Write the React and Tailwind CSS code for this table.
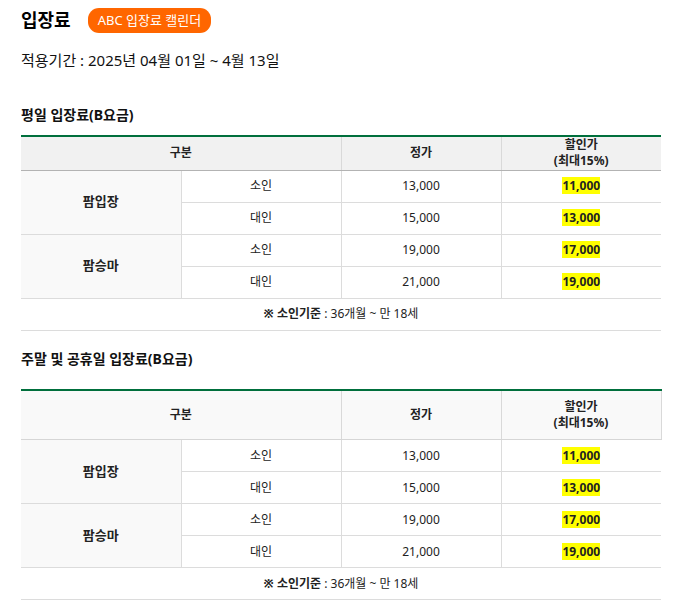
import React from 'react';

const rows = [
  { group: '팜입장', items: [['소인', '13,000', '11,000'], ['대인', '15,000', '13,000']] },
  { group: '팜승마', items: [['소인', '19,000', '17,000'], ['대인', '21,000', '19,000']] },
];

function PriceTable({ variant }) {
  const weekday = variant === 'weekday';
  const headBg = weekday ? 'bg-[#f1f1f1]' : 'bg-[#f9f9f9]';
  const headLine = weekday ? 'border-b-[#b3b3b3]' : 'border-b-[#d6d6d6]';
  const headH = weekday ? 'h-[34px]' : 'h-[50px]';

  return (
    <table className="w-[640px] border-collapse table-fixed border-t-2 border-t-[#006f3c] text-[12px] text-[#222]">
      <colgroup>
        <col className="w-[160px]" />
        <col className="w-[160px]" />
        <col className="w-[160px]" />
        <col className="w-[160px]" />
      </colgroup>
      <thead>
        <tr className={headBg}>
          <th colSpan={2} className={`${headH} border-b ${headLine} border-r border-r-[#d9d9d9] font-bold leading-[16px] p-0`}>구분</th>
          <th className={`${headH} border-b ${headLine} border-r border-r-[#d9d9d9] font-bold leading-[16px] p-0`}>정가</th>
          <th className={`${headH} border-b ${headLine} font-bold leading-[16px] p-0 ${weekday ? '' : 'border-r border-r-[#d9d9d9]'}`}>
            할인가
            <br />
            (최대15%)
          </th>
        </tr>
      </thead>
      <tbody>
        {rows.map((g) =>
          g.items.map(([kind, price, sale], i) => (
            <tr key={g.group + kind}>
              {i === 0 && (
                <td rowSpan={2} className="bg-[#f9f9f9] border-b border-r border-[#dcdcdc] text-center font-bold text-[13px] p-0">
                  {g.group}
                </td>
              )}
              <td className="h-[32px] border-b border-r border-[#dcdcdc] text-center p-0">{kind}</td>
              <td className="h-[32px] border-b border-r border-[#dcdcdc] text-center p-0">{price}</td>
              <td className="h-[32px] border-b border-[#dcdcdc] text-center p-0">
                <span className="bg-[#ffff00] font-bold">{sale}</span>
              </td>
            </tr>
          ))
        )}
        <tr>
          <td colSpan={4} className="h-[32px] border-b border-[#dcdcdc] text-center p-0">
            <span className="font-bold">※ 소인기준</span> : 36개월 ~ 만 18세
          </td>
        </tr>
      </tbody>
    </table>
  );
}

export default function App() {
  return (
    <div className="min-h-[610px] bg-white px-[21px] pt-[8px] text-[#111]" style={{ fontFamily: "'Noto Sans', 'Noto Sans CJK KR', sans-serif" }}>
      <div className="flex items-center gap-[17px]">
        <h1 className="text-[18px] font-bold leading-[25px] text-black">입장료</h1>
        <span className="inline-flex h-[25px] items-center rounded-[11px] bg-[#ff6600] px-[10px] text-[13px] text-white">
          ABC 입장료 캘린더
        </span>
      </div>
      <p className="mt-[17px] text-[15px] leading-[20px]">적용기간 : 2025년 04월 01일 ~ 4월 13일</p>

      <h2 className="mt-[35px] text-[14px] font-bold leading-[20px] text-[#111]">평일 입장료(B요금)</h2>
      <div className="mt-[10px]">
        <PriceTable variant="weekday" />
      </div>

      <h2 className="mt-[18px] text-[14px] font-bold leading-[20px] text-[#111]">주말 및 공휴일 입장료(B요금)</h2>
      <div className="mt-[20px]">
        <PriceTable variant="weekend" />
      </div>
    </div>
  );
}
